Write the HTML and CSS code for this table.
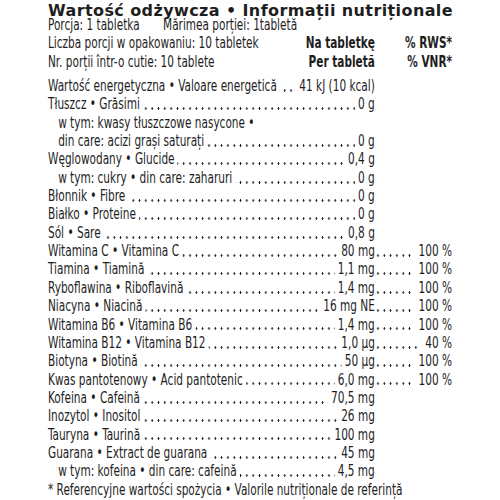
FILE: index.html
```html
<!DOCTYPE html>
<html lang="pl">
<head>
    <meta charset="UTF-8">
    <title>Wartość odżywcza</title>
    <link rel="stylesheet" href="styles.css">
</head>
<body>
    <div class="label">
        <h1 class="title">Wartość odżywcza • Informații nutriționale</h1>
        <div class="table">
            <div class="head">
                <div class="row">
                    <span>Porcja: 1 tabletka</span>
                    <span class="size">Mărimea porției: 1tabletă</span>
                </div>
                <div class="row">
                    <span class="main"><span class="grow">Liczba porcji w opakowaniu: 10 tabletek</span><b>Na tabletkę</b></span>
                    <span class="pct"><b>% RWS*</b></span>
                </div>
                <div class="row">
                    <span class="main"><span class="grow">Nr. porții într-o cutie: 10 tablete</span><b>Per tabletă</b></span>
                    <span class="pct"><b>% VNR*</b></span>
                </div>
            </div>
            <div class="facts">
                <div class="row">
                    <span class="main dots"><span class="name">Wartość energetyczna • Valoare energetică</span><span class="val">41 kJ (10 kcal)</span></span>
                </div>
                <div class="row">
                    <span class="main dots"><span class="name">Tłuszcz • Grăsimi</span><span class="val">0 g</span></span>
                </div>
                <div class="row sub">
                    <span class="main"><span class="name">w tym: kwasy tłuszczowe nasycone •</span></span>
                </div>
                <div class="row sub">
                    <span class="main dots"><span class="name">din care: acizi grași saturați</span><span class="val">0 g</span></span>
                </div>
                <div class="row">
                    <span class="main dots"><span class="name">Węglowodany • Glucide</span><span class="val">0,4 g</span></span>
                </div>
                <div class="row sub">
                    <span class="main dots"><span class="name">w tym: cukry • din care: zaharuri</span><span class="val">0 g</span></span>
                </div>
                <div class="row">
                    <span class="main dots"><span class="name">Błonnik • Fibre</span><span class="val">0 g</span></span>
                </div>
                <div class="row">
                    <span class="main dots"><span class="name">Białko • Proteine</span><span class="val">0 g</span></span>
                </div>
                <div class="row">
                    <span class="main dots"><span class="name">Sól • Sare</span><span class="val">0,8 g</span></span>
                </div>
                <div class="row">
                    <span class="main dots"><span class="name">Witamina C • Vitamina C</span><span class="val">80 mg</span></span>
                    <span class="pct dots"><span class="val">100 %</span></span>
                </div>
                <div class="row">
                    <span class="main dots"><span class="name">Tiamina • Tiamină</span><span class="val">1,1 mg</span></span>
                    <span class="pct dots"><span class="val">100 %</span></span>
                </div>
                <div class="row">
                    <span class="main dots"><span class="name">Ryboflawina • Riboflavină</span><span class="val">1,4 mg</span></span>
                    <span class="pct dots"><span class="val">100 %</span></span>
                </div>
                <div class="row">
                    <span class="main dots"><span class="name">Niacyna • Niacină</span><span class="val">16 mg NE</span></span>
                    <span class="pct dots"><span class="val">100 %</span></span>
                </div>
                <div class="row">
                    <span class="main dots"><span class="name">Witamina B6 • Vitamina B6</span><span class="val">1,4 mg</span></span>
                    <span class="pct dots"><span class="val">100 %</span></span>
                </div>
                <div class="row">
                    <span class="main dots"><span class="name">Witamina B12 • Vitamina B12</span><span class="val">1,0 µg</span></span>
                    <span class="pct dots"><span class="val">40 %</span></span>
                </div>
                <div class="row">
                    <span class="main dots"><span class="name">Biotyna • Biotină</span><span class="val">50 µg</span></span>
                    <span class="pct dots"><span class="val">100 %</span></span>
                </div>
                <div class="row">
                    <span class="main dots"><span class="name">Kwas pantotenowy • Acid pantotenic</span><span class="val">6,0 mg</span></span>
                    <span class="pct dots"><span class="val">100 %</span></span>
                </div>
                <div class="row">
                    <span class="main dots"><span class="name">Kofeina • Cafeină</span><span class="val">70,5 mg</span></span>
                </div>
                <div class="row">
                    <span class="main dots"><span class="name">Inozytol • Inositol</span><span class="val">26 mg</span></span>
                </div>
                <div class="row">
                    <span class="main dots"><span class="name">Tauryna • Taurină</span><span class="val">100 mg</span></span>
                </div>
                <div class="row">
                    <span class="main dots"><span class="name">Guarana • Extract de guarana</span><span class="val">45 mg</span></span>
                </div>
                <div class="row sub">
                    <span class="main dots"><span class="name">w tym: kofeina • din care: cafeină</span><span class="val">4,5 mg</span></span>
                </div>
                <div class="row">
                    <span>* Referencyjne wartości spożycia • Valorile nutriționale de referință</span>
                </div>
            </div>
        </div>
    </div>
</body>
</html>
```

FILE: styles.css
```css
body {
    margin: 0;
    background: #fff;
    color: #1e1e1e;
    font-family: "DejaVu Sans Condensed", "DejaVu Sans", sans-serif;
    font-size: 15px;
}
.label {
    width: 404px;
    padding-left: 48px;
}
.title {
    margin: 0;
    padding-top: 6px;
    height: 10px;
    line-height: 10px;
    font-family: "DejaVu Sans", sans-serif;
    font-size: 16px;
    font-weight: bold;
    letter-spacing: 0.4px;
    white-space: nowrap;
}
/* the print font is a condensed face, so squeeze the table text */
.table {
    width: 518px;
    transform: scaleX(0.78);
    transform-origin: 0 0;
}
.head {
    margin-bottom: 6px;
}
.row {
    display: flex;
    height: 18.35px;
    line-height: 18.35px;
    white-space: nowrap;
}
.row b {
    font-weight: bold;
}
.size {
    margin-left: 30px;
}
.main {
    display: flex;
    justify-content: space-between;
    width: 419px;
}
.grow {
    flex: 1;
}
.pct {
    display: flex;
    justify-content: flex-end;
    width: 99px;
}
.dots {
    background-image: radial-gradient(circle, #1e1e1e 1px, transparent 1.3px);
    background-size: 8.1px 2.6px;
    background-repeat: repeat-x;
    background-position: 0 calc(100% - 4px);
}
.dots .name {
    padding-right: 4px;
    background: #fff;
}
.dots .val {
    padding-left: 4px;
    background: #fff;
}
.pct .val {
    padding-left: 8px;
}
.sub .name {
    padding-left: 13px;
}
```
